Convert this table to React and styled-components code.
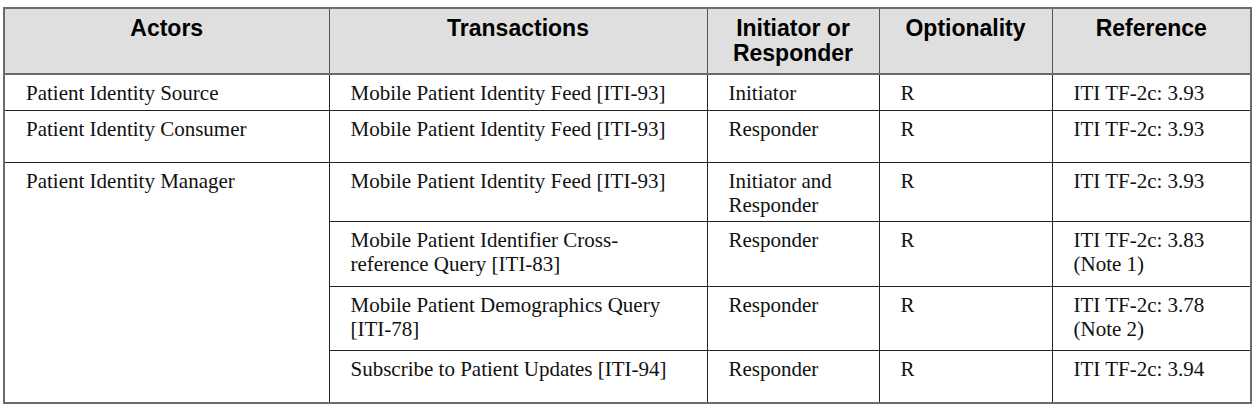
import React from 'react';
import styled, { createGlobalStyle } from 'styled-components';

const GlobalStyle = createGlobalStyle`
  html, body {
    margin: 0;
    padding: 0;
    background: #ffffff;
  }
`;

const Page = styled.div`
  padding: 7px 0 0 3px;
  width: 1254px;
  box-sizing: border-box;
`;

const Table = styled.table`
  border-collapse: collapse;
  table-layout: fixed;
  width: 1247px;
  border: 2px solid #6b6b6b;
`;

const HeadCell = styled.th`
  background: #dfdfdf;
  border: 1px solid #555555;
  border-bottom: 2px solid #6b6b6b;
  font-family: "Liberation Sans", Arial, sans-serif;
  font-weight: bold;
  font-size: 23px;
  line-height: 25px;
  color: #000;
  text-align: center;
  vertical-align: top;
  padding: 7px 4px 0;
  height: 66px;
  box-sizing: border-box;
  white-space: nowrap;
`;

const Row = styled.tr`
  height: ${(p) => p.$h}px;
`;

const Cell = styled.td`
  border: 1px solid #222222;
  font-family: "Liberation Serif", "Times New Roman", serif;
  font-size: 21px;
  line-height: 24px;
  color: #111;
  vertical-align: top;
  padding: 6px 4px 0 21px;
  box-sizing: border-box;
  white-space: nowrap;
`;

const columns = [
  { title: 'Actors', width: 325 },
  { title: 'Transactions', width: 378 },
  { title: ['Initiator or', 'Responder'], width: 172 },
  { title: 'Optionality', width: 173 },
  { title: 'Reference', width: 199 },
];

const Lines = ({ items }) =>
  items.map((t, i) => (
    <React.Fragment key={i}>
      {i > 0 && <br />}
      {t}
    </React.Fragment>
  ));

export default function App() {
  return (
    <>
      <GlobalStyle />
      <Page>
        <Table>
          <colgroup>
            {columns.map((c, i) => (
              <col key={i} style={{ width: c.width }} />
            ))}
          </colgroup>
          <thead>
            <tr>
              {columns.map((c, i) => (
                <HeadCell key={i}>
                  {Array.isArray(c.title) ? <Lines items={c.title} /> : c.title}
                </HeadCell>
              ))}
            </tr>
          </thead>
          <tbody>
            <Row $h={36}>
              <Cell>Patient Identity Source</Cell>
              <Cell>Mobile Patient Identity Feed [ITI-93]</Cell>
              <Cell>Initiator</Cell>
              <Cell>R</Cell>
              <Cell>ITI TF-2c: 3.93</Cell>
            </Row>
            <Row $h={52}>
              <Cell>Patient Identity Consumer</Cell>
              <Cell>Mobile Patient Identity Feed [ITI-93]</Cell>
              <Cell>Responder</Cell>
              <Cell>R</Cell>
              <Cell>ITI TF-2c: 3.93</Cell>
            </Row>
            <Row $h={59}>
              <Cell rowSpan={4}>Patient Identity Manager</Cell>
              <Cell>Mobile Patient Identity Feed [ITI-93]</Cell>
              <Cell>
                <Lines items={['Initiator and', 'Responder']} />
              </Cell>
              <Cell>R</Cell>
              <Cell>ITI TF-2c: 3.93</Cell>
            </Row>
            <Row $h={65}>
              <Cell>
                <Lines items={['Mobile Patient Identifier Cross-', 'reference Query [ITI-83]']} />
              </Cell>
              <Cell>Responder</Cell>
              <Cell>R</Cell>
              <Cell>
                <Lines items={['ITI TF-2c: 3.83', '(Note 1)']} />
              </Cell>
            </Row>
            <Row $h={64}>
              <Cell>
                <Lines items={['Mobile Patient Demographics Query', '[ITI-78]']} />
              </Cell>
              <Cell>Responder</Cell>
              <Cell>R</Cell>
              <Cell>
                <Lines items={['ITI TF-2c: 3.78', '(Note 2)']} />
              </Cell>
            </Row>
            <Row $h={53}>
              <Cell>Subscribe to Patient Updates [ITI-94]</Cell>
              <Cell>Responder</Cell>
              <Cell>R</Cell>
              <Cell>ITI TF-2c: 3.94</Cell>
            </Row>
          </tbody>
        </Table>
      </Page>
    </>
  );
}
